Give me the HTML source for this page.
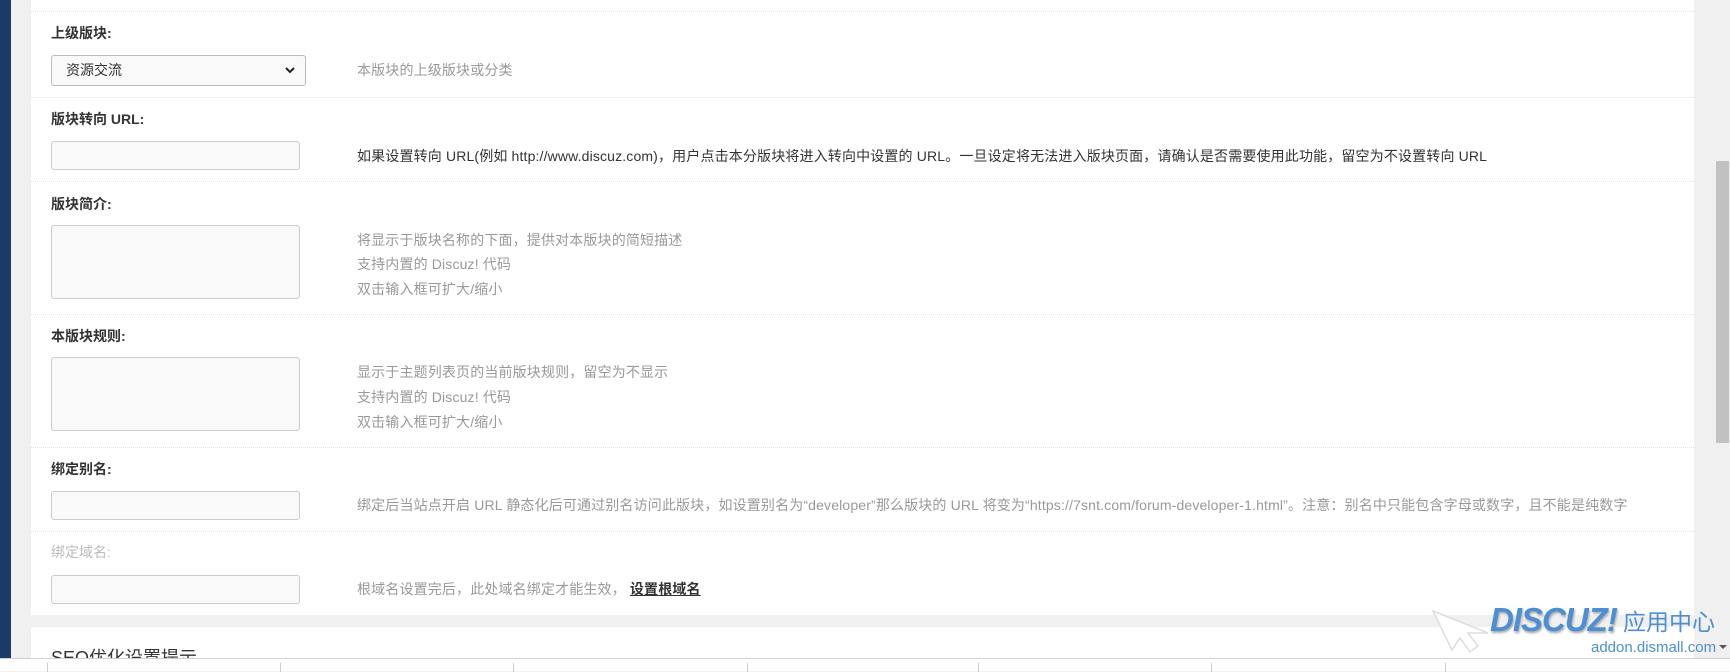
<!DOCTYPE html>
<html><head><meta charset="utf-8">
<style>
*{box-sizing:border-box;margin:0;padding:0}
html,body{width:1730px;height:671px;overflow:hidden;background:#f0f0f0;font-family:"Liberation Sans","Noto Sans CJK SC",sans-serif;font-size:14px;color:#333}
.bar{position:absolute;left:0;top:0;width:11px;height:671px;background:#1b3b66}
.panel{position:absolute;left:31px;top:0;width:1663px;height:615px;background:#fff}
.line{position:absolute;left:0;width:1663px;border-top:1px dotted #dde4ec}
.lbl{position:absolute;left:20px;font-weight:bold;color:#333;line-height:20px}
.inp{position:absolute;left:20px;width:249px;height:29px;background:#f9f9f9;border:1px solid #ccc;border-radius:3px}
.ta{position:absolute;left:20px;width:249px;height:74px;background:#f9f9f9;border:1px solid #ccc;border-radius:3px}
.sel{position:absolute;left:20px;top:55px;width:255px;height:31px;background:#f9f9f9;border:1px solid #bbb;border-radius:3px;padding-left:14px;line-height:29px;color:#333}
.sel svg{position:absolute;right:10px;top:11px}
.tip{position:absolute;left:326px;color:#999;line-height:20px;white-space:nowrap;letter-spacing:0.15px}
.scroll{position:absolute;left:1716px;top:161px;width:13px;height:282px;background:#c1c1c1}
.p2{position:absolute;left:31px;top:627px;width:1663px;height:40px;background:#fff}
.bot{position:absolute;left:0;top:658px;width:1730px;height:13px;background:#fff;border-top:1px solid #d0d0d0}
.sep{position:absolute;top:4px;width:1px;height:9px;background:#ccc}
</style></head><body>
<div class="bar"></div>
<div class="panel">
  <div class="line" style="top:11px"></div>
  <div class="lbl" style="top:23px">上级版块:</div>
  <div class="sel">资源交流<svg width="10" height="7" viewBox="0 0 10 7"><path d="M1 1l4 4 4-4" stroke="#222" stroke-width="2" fill="none"/></svg></div>
  <div class="tip" style="top:60px">本版块的上级版块或分类</div>

  <div class="line" style="top:97px"></div>
  <div class="lbl" style="top:109px">版块转向 URL:</div>
  <div class="inp" style="top:141px"></div>
  <div class="tip" style="top:146px;color:#333">如果设置转向 URL(例如 http://www.discuz.com)，用户点击本分版块将进入转向中设置的 URL。一旦设定将无法进入版块页面，请确认是否需要使用此功能，留空为不设置转向 URL</div>

  <div class="line" style="top:181px"></div>
  <div class="lbl" style="top:194px">版块简介:</div>
  <div class="ta" style="top:225px"></div>
  <div class="tip" style="top:230px">将显示于版块名称的下面，提供对本版块的简短描述</div>
  <div class="tip" style="top:254px">支持内置的 Discuz! 代码</div>
  <div class="tip" style="top:279px">双击输入框可扩大/缩小</div>

  <div class="line" style="top:314px"></div>
  <div class="lbl" style="top:326px">本版块规则:</div>
  <div class="ta" style="top:357px"></div>
  <div class="tip" style="top:362px">显示于主题列表页的当前版块规则，留空为不显示</div>
  <div class="tip" style="top:387px">支持内置的 Discuz! 代码</div>
  <div class="tip" style="top:412px">双击输入框可扩大/缩小</div>

  <div class="line" style="top:447px"></div>
  <div class="lbl" style="top:459px">绑定别名:</div>
  <div class="inp" style="top:491px"></div>
  <div class="tip" style="top:495px">绑定后当站点开启 URL 静态化后可通过别名访问此版块，如设置别名为“developer”那么版块的 URL 将变为“https://7snt.com/forum-developer-1.html”。注意：别名中只能包含字母或数字，且不能是纯数字</div>

  <div class="line" style="top:531px"></div>
  <div class="lbl" style="top:542px;color:#bbb;font-weight:normal">绑定域名:</div>
  <div class="inp" style="top:575px"></div>
  <div class="tip" style="top:579px">根域名设置完后，此处域名绑定才能生效， <span style="color:#333;text-decoration:underline;font-weight:bold">设置根域名</span></div>
</div>
<div class="p2"><div style="position:absolute;left:20px;top:17px;font-size:18px;color:#333">SEO优化设置提示</div></div>
<div style="position:absolute;left:1694px;top:0;width:36px;height:671px;background:#f0f0f0"></div>
<div class="scroll"></div>
<svg style="position:absolute;left:1430px;top:606px" width="62" height="50" viewBox="0 0 62 50">
<path d="M3 5 L58 27 L38 27 L48 40 L40 46 L30 32 L22 44 Z" fill="#fff" stroke="#ddd" stroke-width="1.5"/>
</svg>
<div style="position:absolute;left:1490px;top:601px;font:italic bold 33px 'Liberation Sans',sans-serif;color:#4d8fd2;letter-spacing:-1px;text-shadow:1px 2px 2px #aaa">DISCUZ!</div>
<div style="position:absolute;left:1623px;top:606px;font-size:23px;color:#4d8fd2;font-family:'Noto Sans CJK SC',sans-serif;line-height:28px">应用中心</div>
<div style="position:absolute;left:1591px;top:638px;font-size:15px;color:#4d8fd2;line-height:20px">addon.dismall.com</div>
<div style="position:absolute;left:1719px;top:645px;width:0;height:0;border-left:4px solid transparent;border-right:4px solid transparent;border-top:4px solid #555"></div>
<div class="bot">
<div class="sep" style="left:47px"></div><div class="sep" style="left:280px"></div><div class="sep" style="left:513px"></div><div class="sep" style="left:747px"></div><div class="sep" style="left:978px"></div><div class="sep" style="left:1211px"></div><div class="sep" style="left:1445px"></div>
</div>
</body></html>
